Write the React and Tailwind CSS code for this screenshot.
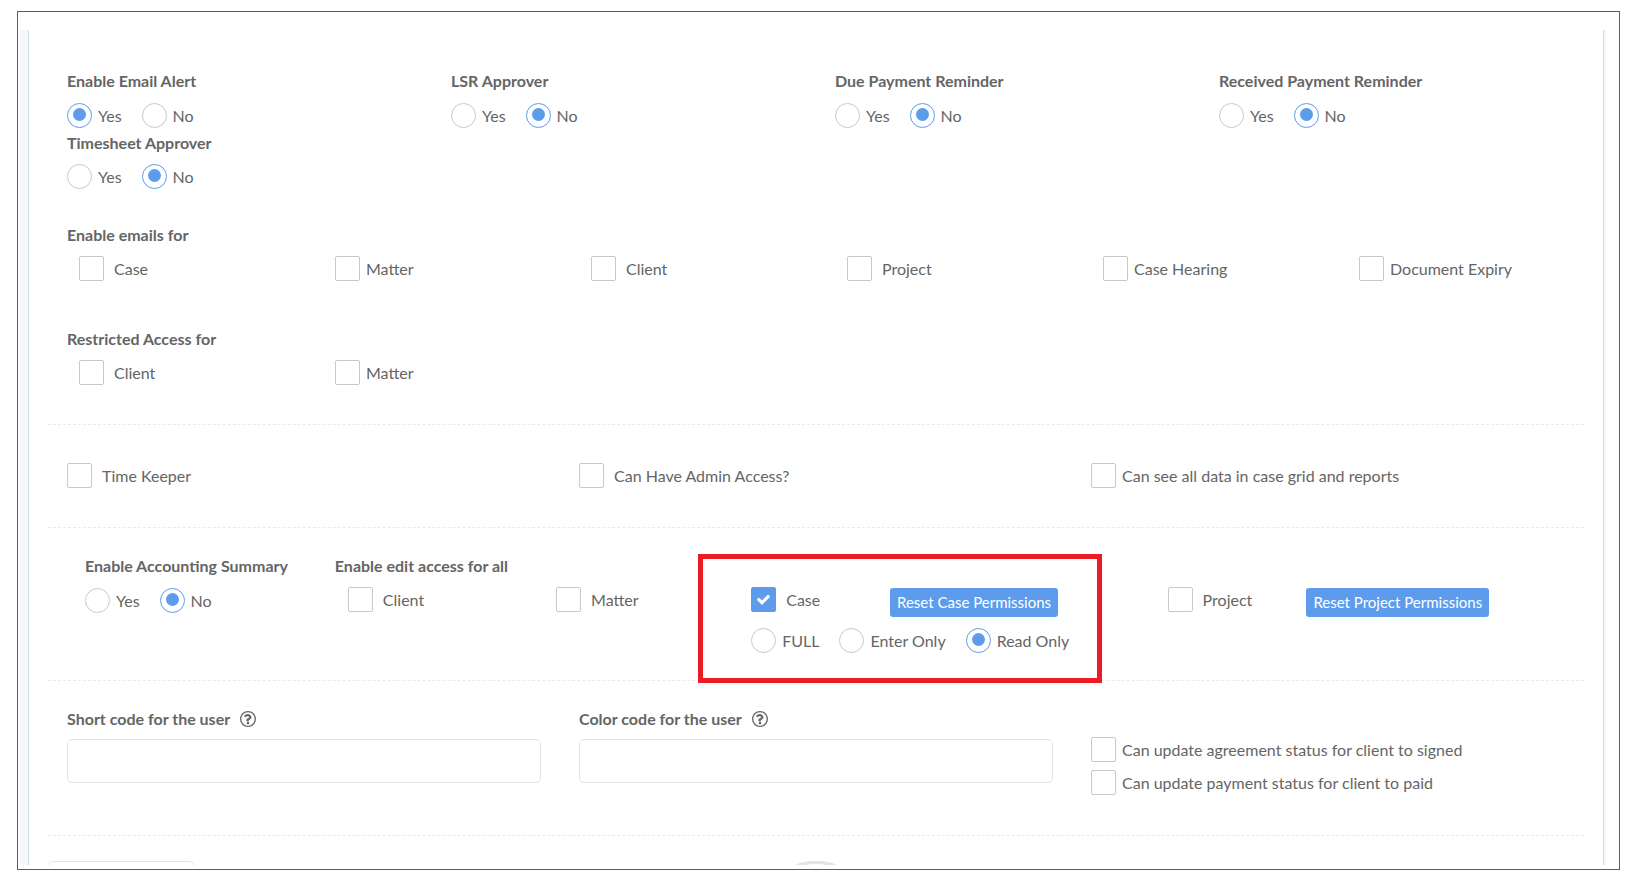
import React, { useState } from 'react';

const inputBase = 'appearance-none shrink-0 size-[25px] border border-[#c8c8c8] bg-white';

function Heading({ children }) {
  return <h3 className="text-base leading-[22px] font-bold">{children}</h3>;
}

function Radio({ name, label, checked, onChange }) {
  return (
    <label className="flex items-center gap-[6px] leading-[25px]">
      <input
        type="radio"
        name={name}
        checked={checked}
        onChange={onChange}
        className={`${inputBase} grid place-items-center rounded-full checked:border-[#5d9cec] checked:before:mb-[2px] checked:before:size-[13px] checked:before:rounded-full checked:before:bg-[#5d9cec] checked:before:content-['']`}
      />
      <span>{label}</span>
    </label>
  );
}

function RadioGroup({ name, options, initial }) {
  const [value, setValue] = useState(initial);

  return (
    <div role="radiogroup" aria-label={name} className="flex gap-5">
      {options.map(option => (
        <Radio
          key={option}
          name={name}
          label={option}
          checked={value === option}
          onChange={() => setValue(option)}
        />
      ))}
    </div>
  );
}

function Checkbox({ label, initial = false, tight = false }) {
  const [checked, setChecked] = useState(initial);

  return (
    <label className={`flex items-center leading-[25px] ${tight ? 'gap-[6px]' : 'gap-[10px]'}`}>
      <span className="grid shrink-0 place-items-center">
        <input
          type="checkbox"
          checked={checked}
          onChange={() => setChecked(!checked)}
          className={`${inputBase} col-start-1 row-start-1 rounded-[2px] checked:border-[#5d9cec] checked:bg-[#5d9cec]`}
        />
        {checked && (
          <svg viewBox="0 0 1792 1792" className="pointer-events-none col-start-1 row-start-1 size-[15px] fill-white" aria-hidden="true">
            <path d="M1671 566q0 40-28 68l-724 724-136 136q-28 28-68 28t-68-28l-136-136-362-362q-28-28-28-68t28-68l136-136q28-28 68-28t68 28l294 295 656-657q28-28 68-28t68 28l136 136q28 28 28 68z" />
          </svg>
        )}
      </span>
      <span className="whitespace-nowrap">{label}</span>
    </label>
  );
}

function HelpIcon() {
  return (
    <svg viewBox="0 0 1536 1536" className="size-4 fill-[#666]" aria-hidden="true">
      <path d="M880 1072v160q0 14-9 23t-23 9h-160q-14 0-23-9t-9-23v-160q0-14 9-23t23-9h160q14 0 23 9t9 23zM1098 592q0 50-15 90t-45.500 69-52 44-59.500 36q-32 18-46.500 28t-26 24-11.500 29v32q0 14-9 23t-23 9h-160q-14 0-23-9t-9-23v-68q0-35 10.500-64.500t24-47.500 39-35.500 41-25.500 44.500-21q53-25 75-43t22-49q0-42-43.500-71.500t-95.500-29.500q-56 0-95 27-29 20-80 83-9 12-25 12-11 0-19-6l-108-82q-10-7-12-20t5-23q122-192 349-192 129 0 238.500 89.500t109.500 214.500zM768 128q-130 0-248.500 51t-204 136.500-136.500 204-51 248.500 51 248.500 136.500 204 204 136.500 248.500 51 248.500-51 204-136.500 136.500-204 51-248.500-51-248.500-136.500-204-204-136.500-248.500-51zM1536 768q0 209-103 385.500t-279.500 279.500-385.500 103-385.500-103-279.500-279.500-103-385.500 103-385.500 279.500-279.500 385.500-103 385.500 103 279.500 279.500 103 385.500z" />
    </svg>
  );
}

function CodeField({ id, label }) {
  return (
    <div className="px-[19px]">
      <label htmlFor={id} className="flex items-center gap-[10px] leading-[22px] font-bold">
        {label}
        <HelpIcon />
      </label>
      <input
        id={id}
        type="text"
        className="mt-[9px] block h-11 w-full rounded-[5px] border border-[#dde6e9] bg-white px-4 outline-none"
      />
    </div>
  );
}

function ResetButton({ children }) {
  return (
    <button type="button" className="mt-px h-[29px] rounded-[3px] bg-[#5d9cec] px-[7px] text-[15px] leading-[29px] whitespace-nowrap text-white">
      {children}
    </button>
  );
}

const approvals = [
  { title: 'Enable Email Alert', initial: 'Yes' },
  { title: 'LSR Approver', initial: 'No' },
  { title: 'Due Payment Reminder', initial: 'No' },
  { title: 'Received Payment Reminder', initial: 'No' },
];

const emailOptions = [
  { label: 'Case' },
  { label: 'Matter', tight: true },
  { label: 'Client' },
  { label: 'Project' },
  { label: 'Case Hearing', tight: true },
  { label: 'Document Expiry', tight: true },
];

const divider = 'border-b border-dashed border-[#e8eaec]';
const yesNo = ['Yes', 'No'];

function App() {
  return (
    <div className="bg-white pt-[11px] pr-7 pb-[26px] pl-[17px] font-['Lato','Open_Sans',sans-serif] text-base text-[#656565]">
      <div className="border border-[#e0242b] pt-[18px] pr-[13px] pb-1 pl-[2px]">
        <div className="bg-[#f4f7fb] pr-[2px] pl-2">
          <form className="border-x border-[#cfdbe2] bg-white px-[19px]" onSubmit={e => e.preventDefault()}>
            <section className={`${divider} pt-10 pb-[39px]`}>
              <div className="grid grid-cols-4">
                {approvals.map(item => (
                  <div key={item.title} className="flex flex-col gap-[11px] px-[19px]">
                    <Heading>{item.title}</Heading>
                    <RadioGroup name={item.title} options={yesNo} initial={item.initial} />
                  </div>
                ))}
              </div>
              <div className="mt-1 flex flex-col gap-[10px] px-[19px]">
                <Heading>Timesheet Approver</Heading>
                <RadioGroup name="Timesheet Approver" options={yesNo} initial="No" />
              </div>

              <div className="mt-[35px] pl-[19px]">
                <Heading>Enable emails for</Heading>
              </div>
              <div className="mt-[10px] grid grid-cols-6">
                {emailOptions.map(option => (
                  <div key={option.label} className="pl-[31px]">
                    <Checkbox label={option.label} tight={option.tight} />
                  </div>
                ))}
              </div>

              <div className="mt-[47px] pl-[19px]">
                <Heading>Restricted Access for</Heading>
              </div>
              <div className="mt-[10px] grid grid-cols-6">
                <div className="pl-[31px]">
                  <Checkbox label="Client" />
                </div>
                <div className="pl-[31px]">
                  <Checkbox label="Matter" tight />
                </div>
              </div>
            </section>

            <section className={`${divider} grid grid-cols-3 pt-[38px] pb-[39px]`}>
              <div className="pl-[19px]">
                <Checkbox label="Time Keeper" />
              </div>
              <div className="pl-[19px]">
                <Checkbox label="Can Have Admin Access?" />
              </div>
              <div className="pl-[19px]">
                <Checkbox label="Can see all data in case grid and reports" tight />
              </div>
            </section>

            <section className={`${divider} grid grid-cols-6 pt-[27px] pb-[27px] pl-[37px]`}>
              <div className="flex flex-col gap-[11px]">
                <Heading>Enable Accounting Summary</Heading>
                <RadioGroup name="Enable Accounting Summary" options={yesNo} initial="No" />
              </div>
              <div className="col-span-5">
                <Heading>Enable edit access for all</Heading>
                <div className="mt-[10px] grid grid-cols-12">
                  <div className="col-span-2 pl-[13px]">
                    <Checkbox label="Client" />
                  </div>
                  <div className="col-span-2 pl-[13px]">
                    <Checkbox label="Matter" />
                  </div>
                  <div className="relative col-span-4">
                    <div className="grid grid-cols-3 items-start">
                      <Checkbox label="Case" initial />
                      <div className="col-span-2 flex">
                        <ResetButton>Reset Case Permissions</ResetButton>
                      </div>
                    </div>
                    <div className="mt-[11px]">
                      <RadioGroup
                        name="Case access level"
                        options={['FULL', 'Enter Only', 'Read Only']}
                        initial="Read Only"
                      />
                    </div>
                    {/* callout frame around the case permissions */}
                    <div className="pointer-events-none absolute -top-[33px] right-[66px] -left-[53px] h-[129px] border-5 border-[#ed1c24]"></div>
                  </div>
                  <div className="col-span-4 grid grid-cols-3 items-start">
                    <Checkbox label="Project" />
                    <div className="col-span-2 flex">
                      <ResetButton>Reset Project Permissions</ResetButton>
                    </div>
                  </div>
                </div>
              </div>
            </section>

            <section className={`${divider} grid grid-cols-3 pt-[27px] pb-10`}>
              <CodeField id="short-code" label="Short code for the user" />
              <CodeField id="color-code" label="Color code for the user" />
              <div className="flex flex-col gap-2 pt-[29px] pl-[19px]">
                <Checkbox label="Can update agreement status for client to signed" tight />
                <Checkbox label="Can update payment status for client to paid" tight />
              </div>
            </section>

            {/* only the top edge of the footer row is visible */}
            <section className="grid h-[29px] grid-cols-[1fr_auto_1fr] overflow-hidden pt-[25px]">
              <div className="h-11 w-[146px] rounded-[5px] border border-[#dde6e9]"></div>
              <div className="size-[118px] rounded-full border-3 border-[#e2e3e3]"></div>
            </section>
          </form>
        </div>
      </div>
    </div>
  );
}

export default App;
